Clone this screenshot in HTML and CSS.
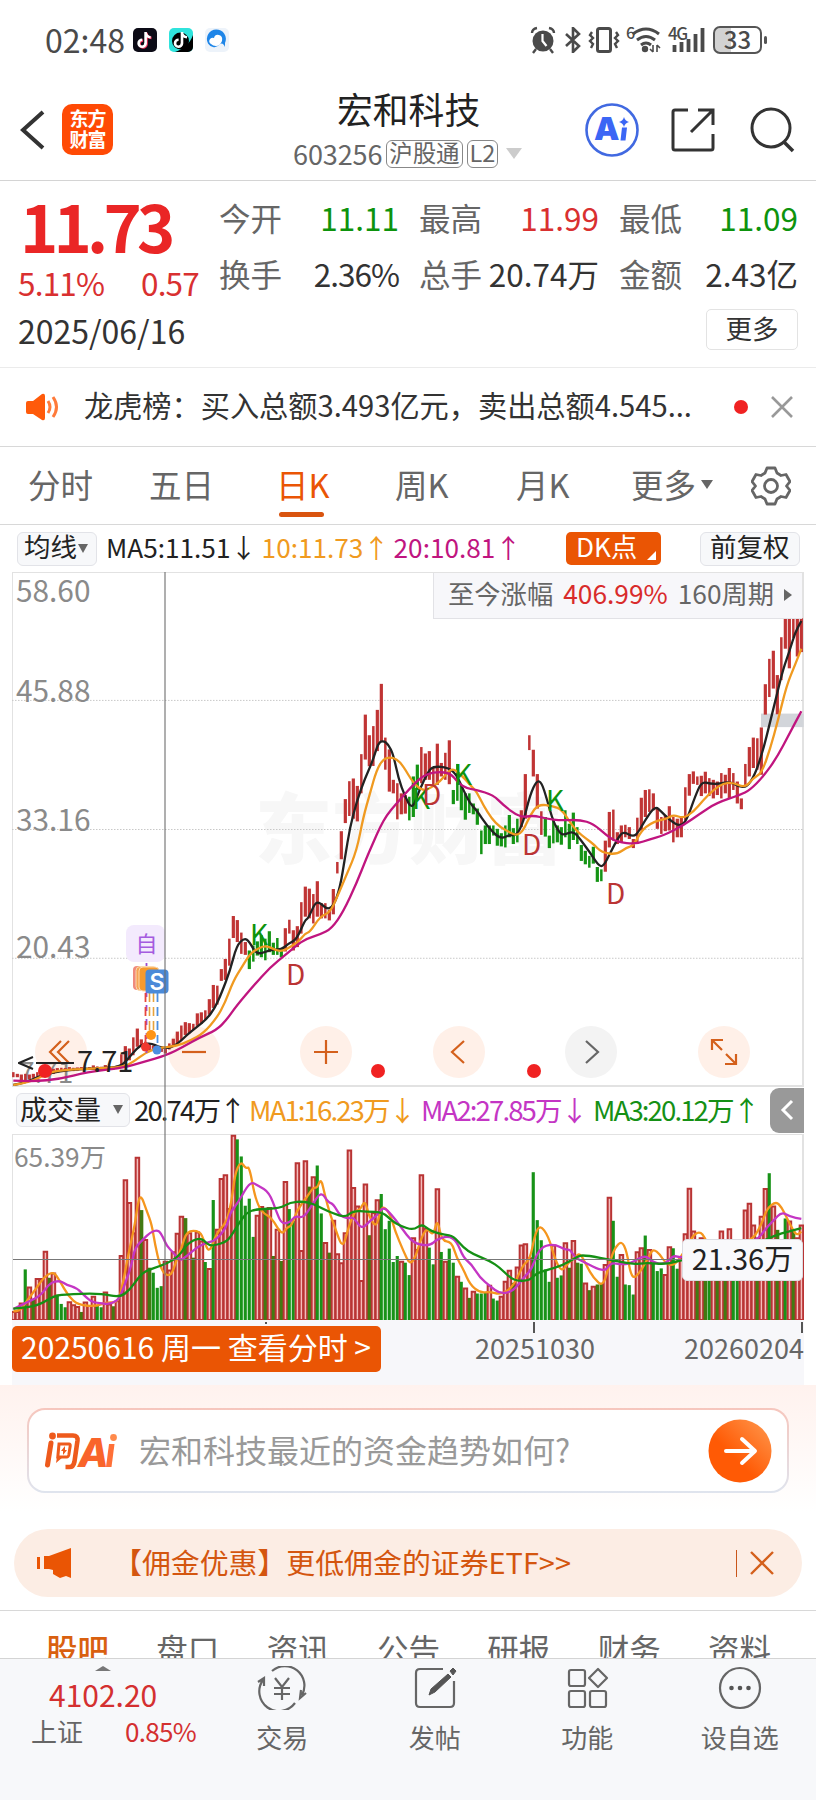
FILE: index.html
```html
<!DOCTYPE html>
<html lang="zh-CN">
<head>
  <meta charset="UTF-8" />
  <meta name="viewport" content="width=device-width, initial-scale=1.0" />
  <title>宏和科技 603256</title>
  <link rel="stylesheet" href="styles.css">
</head>
<body>
  <div class="status-bar">
    <span class="clock">02:48</span>
    <svg class="app-icon" viewBox="0 0 24 24">
      <rect width="24" height="24" rx="5" fill="#0c0b16"/>
      <g fill="none" stroke-width="2.6"><path d="M12.6 4v11.4a3.5 3.5 0 1 1-3.4-3.6M12.6 5c.6 2.600 2.400 4 5 4.200" stroke="#f2345c" transform="translate(.9 .7)"/><path d="M12.600 4v11.400a3.500 3.500 0 1 1-3.400-3.600M12.600 5c.6 2.600 2.400 4 5 4.200" stroke="#fff"/></g>
    </svg>
    <svg class="app-icon" viewBox="0 0 24 24">
      <rect width="24" height="24" rx="5" fill="#2fe3dc"/>
      <path d="M24 7v12a5 5 0 0 1-5 5H6C13 22 21 16 24 7z" fill="#000"/>
      <circle cx="11.500" cy="13" r="8.500" fill="#000"/>
      <path d="M13 4v11.400a3.500 3.500 0 1 1-3.400-3.600M13 5c.6 2.600 2.400 4 5 4.200" fill="none" stroke="#fff" stroke-width="2.600"/>
    </svg>
    <svg class="app-icon" viewBox="0 0 24 24">
      <rect width="24" height="24" rx="5" fill="#edf3fa"/>
      <path d="M3 15.500A9.500 9.500 0 1 1 20 15v4q-2-5-5-3-3 4-7 3-3-.5-5-3.500z" fill="#1f86e8"/>
      <path d="M6 16q-3-2-1-5 2-2 4-1 1-4 5-3 4 1 3 6-2 5-6 5-3 0-5-2z" fill="#fff"/>
    </svg>
    <div class="status-right">
      <svg width="26" height="28" viewBox="0 0 26 28"><circle cx="13" cy="15" r="10.500" fill="#4a4a4a"/><path d="M2 7q0-4 5-5M24 7q0-4-5-5M6 23l-3 4M20 23l3 4" fill="none" stroke="#4a4a4a" stroke-width="2.400"/><path d="M12.500 8v7l4 5" fill="none" stroke="#fff" stroke-width="2.200"/></svg>
      <svg class="bt" width="16" height="26" viewBox="0 0 16 26"><path d="M1 7l13 12-6 6V1l6 6L1 19" fill="none" stroke="#4a4a4a" stroke-width="2.600"/></svg>
      <svg class="vib" width="32" height="26" viewBox="0 0 32 26"><rect x="9.500" y="1.500" width="13" height="23" rx="2" fill="none" stroke="#4a4a4a" stroke-width="3"/><path d="M4 5l-2 3 3 3-3 3 3 3-2 4M28 5l2 3-3 3 3 3-3 3 2 4" fill="none" stroke="#4a4a4a" stroke-width="2.400"/></svg>
      <span class="wifi"><i>6</i>
        <svg width="30" height="26" viewBox="0 0 30 26"><path d="M2 7q13-10 26 0M6 13q9-7 18 0M10 18q5-4 10 0" fill="none" stroke="#4a4a4a" stroke-width="3"/><circle cx="14" cy="22" r="3.200" fill="#4a4a4a"/><path d="M22 18v7M19 22l3 3M26 25v-7M26 18l3 3" stroke="#4a4a4a" stroke-width="1.600"/></svg>
      </span>
      <span class="cell"><i>4G</i>
        <svg width="34" height="26" viewBox="0 0 34 26"><path d="M3.500 25v-7M10.500 25V15M17.500 25V12M24.500 25V7M31.500 25V1" stroke="#4a4a4a" stroke-width="3.800"/></svg>
      </span>
      <span class="battery">33</span>
    </div>
  </div>

  <header class="header">
    <svg class="back" width="25" height="40" viewBox="0 0 25 40"><path d="M23 2L3 20l20 18" fill="none" stroke="#333" stroke-width="4"/></svg>
    <div class="brand">东方<br>财富</div>
    <div class="heading">
      <h1>宏和科技</h1>
      <div class="code">603256<b>沪股通</b><b>L2</b><i class="caret"></i></div>
    </div>
    <svg class="h-ai" width="54" height="54" viewBox="0 0 54 54"><circle cx="27" cy="27" r="25.500" fill="#fff" stroke="#4169e1" stroke-width="2.600"/><text x="9" y="37" class="ai-text">A</text><path d="M35.500 37.500l1.500-13h5l-1.500 13zM39 14q1 4 5 5-4 1-5 5-1-4-5-5 4-1 5-5z" fill="#3b66f5"/></svg>
    <svg class="h-share" width="44" height="44" viewBox="0 0 44 44"><path d="M17 2H4q-2 0-2 2v36q0 2 2 2h36q2 0 2-2V26M27 2h15v15M41 3L20 24" fill="none" stroke="#333" stroke-width="3"/></svg>
    <svg class="h-search" width="46" height="46" viewBox="0 0 46 46"><circle cx="21" cy="21" r="19" fill="none" stroke="#333" stroke-width="3"/><path d="M34 35l9 9" stroke="#333" stroke-width="3.500"/></svg>
  </header>

  <section class="quote">
    <div class="price">
      <div class="last">11.73</div>
      <div class="change"><span>5.11%</span><span>0.57</span></div>
    </div>
    <div class="stats">
      <div><label>今开</label><span class="down">11.11</span></div>
      <div><label>最高</label><span class="up">11.99</span></div>
      <div><label>最低</label><span class="down">11.09</span></div>
      <div><label>换手</label><span class="rate">2.36%</span></div>
      <div><label>总手</label><span>20.74万</span></div>
      <div><label>金额</label><span>2.43亿</span></div>
    </div>
    <div class="date">2025/06/16</div>
    <div class="more">更多</div>
  </section>

  <div class="notice">
    <svg width="34" height="28" viewBox="0 0 34 28"><path d="M0 10q0-2 2-2h5l9-7q3-1 3 2v22q0 3-3 2l-9-6H2q-2 0-2-2z" fill="#ff5a0a"/><path d="M22 8q4 6 0 12M27 4q7 10 0 20" fill="none" stroke="#ff7a3a" stroke-width="3"/></svg>
    <p>龙虎榜：买入总额3.493亿元，卖出总额4.545...</p>
    <i class="dot"></i>
    <svg width="24" height="24" viewBox="0 0 24 24"><path d="M2 2l20 20M22 2L2 22" stroke="#999" stroke-width="2.600"/></svg>
  </div>

  <nav class="tabs">
    <a>分时</a>
    <a>五日</a>
    <a class="active">日K</a>
    <a>周K</a>
    <a>月K</a>
    <a class="tab-more">更多<i></i></a>
    <svg width="40" height="40" viewBox="0 0 40 40"><path d="M16 2h8l2 5 4 2.500 5-1 4 7-3.500 4.500 3.500 4.500-4 7-5-1-4 2.500-2 5h-8l-2-5-4-2.500-5 1-4-7L4.500 20 1 15.500l4-7 5 1L14 7z" fill="none" stroke="#666" stroke-width="2.800" stroke-linejoin="round"/><circle cx="20" cy="20" r="6.500" fill="none" stroke="#666" stroke-width="2.800"/></svg>
  </nav>

  <div class="ma-row">
    <span class="pill">均线<i class="tri"></i></span>
    <span class="ma5">MA5:11.51↓</span>
    <span class="ma10">10:11.73↑</span>
    <span class="ma20">20:10.81↑</span>
    <span class="dk">DK点<i></i></span>
    <span class="pill adjust">前复权</span>
  </div>

  <div class="charts">
    <div class="price-chart">
      <div class="watermark">东方财富</div>
      <div class="controls">
        <span><svg viewBox="0 0 52 52"><path d="M26 15L15 26l11 11M34 15L23 26l11 11"/></svg></span>
        <span><svg viewBox="0 0 52 52"><path d="M14 26h24"/></svg></span>
        <span><svg viewBox="0 0 52 52"><path d="M14 26h24M26 14v24"/></svg></span>
        <span><svg viewBox="0 0 52 52"><path d="M31 15L19 26l12 11"/></svg></span>
        <span class="off"><svg viewBox="0 0 52 52"><path d="M21 15l12 11-12 11"/></svg></span>
        <span><svg viewBox="0 0 52 52"><path d="M14 24V14h11M14 14l10 10M27 38h11V28M38 38L28 28"/></svg></span>
      </div>
      <span class="axis a5">7.71</span>
      <svg id="kline" viewBox="36 35 2376 1521" preserveAspectRatio="none"></svg>
      <span class="axis a1">58.60</span>
      <span class="axis a2">45.88</span>
      <span class="axis a3">33.16</span>
      <span class="axis a4">20.43</span>
      <span class="mark k k1">K</span>
      <span class="mark d d1">D</span>
      <span class="mark k k2">K</span>
      <span class="mark d d2">D</span>
      <span class="mark k k3">K</span>
      <span class="mark k k4">K</span>
      <span class="mark d d3">D</span>
      <span class="mark d d4">D</span>
      <div class="range">至今涨幅 <em>406.99%</em> 160周期<i></i></div>

      <svg class="signals" width="44" height="166" viewBox="0 0 44 166">
        <path d="M20.500 38v92" stroke="#9b4bd3" stroke-width="1.800" stroke-dasharray="6 8"/>
        <path d="M19.500 68v56" stroke="#e8453c" stroke-width="1.800" stroke-dasharray="9 5"/>
        <path d="M23.500 68v46M27.500 68v46" stroke="#e6a23c" stroke-width="1.600" stroke-dasharray="9 5"/>
        <path d="M31.500 68v50" stroke="#4d8fe0" stroke-width="1.800" stroke-dasharray="9 5"/>
        <rect x="0" y="0" width="39" height="37" rx="8" fill="#f3eafd"/>
        <rect x="7" y="41" width="20" height="24" rx="4" fill="#f08a7c"/>
        <rect x="10" y="41.500" width="20" height="24" rx="4" fill="#f7a254" stroke="#fbd9b0"/>
        <rect x="13" y="42" width="20" height="24" rx="4" fill="#f79a2e" stroke="#fbd9b0"/>
        <rect x="19.500" y="44.500" width="23" height="24" rx="4" fill="#4b8ad8"/>
        <circle cx="25" cy="110" r="5" fill="#ff9416"/>
        <circle cx="19.500" cy="122" r="4.500" fill="#f0392f"/>
        <circle cx="31" cy="125" r="4.500" fill="#4b8ee0"/>
        <text x="9.500" y="27" class="zi">自</text>
        <text x="23.500" y="65" class="s-mark">S</text>
      </svg>

      <i class="event e1"></i><i class="event e2"></i><i class="event e3"></i>
      <svg class="low-arrow" width="58" height="14" viewBox="0 0 58 14"><path d="M15 1L1 7l14 6M18 7h38" fill="none" stroke="#222" stroke-width="2"/></svg>
      <span class="low">7.71</span>
    </div>

    <div class="vol-row">
      <span class="pill">成交量<i class="tri"></i></span>
      <span class="v0">20.74万↑</span>
      <span class="ma10">MA1:16.23万↓</span>
      <span class="v2">MA2:27.85万↓</span>
      <span class="v3">MA3:20.12万↑</span>
      <span class="fold"><svg width="14" height="22" viewBox="0 0 14 22"><path d="M12 2L3 11l9 9" fill="none" stroke="#fff" stroke-width="3"/></svg></span>
    </div>

    <div class="vol-chart">
      <svg id="volume" viewBox="36 161 2376 558" preserveAspectRatio="none"></svg>
      <span class="axis v-max">65.39万</span>
      <i class="h-line"></i>
      <span class="v-label">21.36万</span>
    </div>
    <i class="v-line"></i>

    <div class="dates">
      <span class="picked">20250616 周一 查看分时 &gt;</span>
      <span class="mid">20251030</span>
      <span>20260204</span>
      <i class="tick t1"></i><i class="tick t2"></i><i class="tick t3"></i>
    </div>
  </div>

  <section class="ask">
    <div class="ask-box">
      <svg width="74" height="38" viewBox="0 0 74 38">
        <path d="M7 11L3.500 33" fill="none" stroke="#ee5a1c" stroke-width="5" stroke-linecap="round"/>
        <path d="M13 3.500h16q5 0 4.500 5l-3 21q-1 5.500-5 5.500h-4" fill="none" stroke="#ee5a1c" stroke-width="4.600"/>
        <circle cx="8.500" cy="4" r="3.400" fill="#ee5a1c"/>
        <path d="M15 12h10q1.500 0 1.200 2l-1.400 9q-.5 2-2 2h-9z" fill="none" stroke="#ee5a1c" stroke-width="3"/>
        <path d="M13 25l-1 6 7-6zM17 19l4-5v4h2l-4 5v-4z" fill="#ee5a1c"/>
        <text x="34" y="35" class="ask-ai">A</text>
        <path d="M62 35l3-23h5.500l-3 23z" fill="#ff7038"/><circle cx="69.500" cy="5.500" r="3.400" fill="#ff8a4c"/>
      </svg>
      <span>宏和科技最近的资金趋势如何?</span>
      <svg class="go" width="64" height="64" viewBox="0 0 64 64">
        <defs><linearGradient id="gg" x1="0" y1="1" x2="1" y2="0"><stop offset=".4" stop-color="#ff5a05"/><stop offset="1" stop-color="#ff9a50"/></linearGradient></defs>
        <circle cx="32" cy="32" r="31.500" fill="url(#gg)"/><path d="M18 32h28M34 20l13 12-13 12" fill="none" stroke="#fff" stroke-width="4" stroke-linecap="round" stroke-linejoin="round"/>
      </svg>
    </div>
  </section>

  <div class="promo">
    <svg width="36" height="30" viewBox="0 0 36 30"><path d="M0 9h3v12H0zM7 8h5L34 0v30l-5-2-6 2-7-4v-4l-4-1H7z" fill="#ea5504"/></svg>
    <span>【佣金优惠】更低佣金的证券ETF&gt;&gt;</span>
    <i></i>
    <svg width="24" height="24" viewBox="0 0 24 24"><path d="M1 1l22 22M23 1L1 23" stroke="#d4601c" stroke-width="2.400"/></svg>
  </div>

  <nav class="sub-tabs">
    <a class="active">股吧</a><a>盘口</a><a>资讯</a><a>公告</a><a>研报</a><a>财务</a><a>资料</a>
  </nav>

  <footer class="bottom-bar">
    <div class="index">
      <i></i>
      <strong>4102.20</strong>
      <div><span>上证</span><em>0.85%</em></div>
    </div>
    <div class="item">
      <svg width="50" height="44" viewBox="0 0 50 44"><path d="M15 5a19.500 19.500 0 0 1 30 24M38 37A19.500 19.500 0 0 1 6 14M1 16l6-4v8M49 27l-6 5 1-8M18 12l7 9 7-9M17 22h16M17 28h16M25 21v13" fill="none" stroke="#666" stroke-width="2.200"/></svg>
      交易
    </div>
    <div class="item">
      <svg width="44" height="44" viewBox="0 0 44 44"><path d="M30 3H7Q3 3 3 7v30q0 4 4 4h30q4 0 4-4V15" fill="none" stroke="#666" stroke-width="2.200"/><path d="M16 29l2-6L35 8l3 3-16 15zM37 5l3-3 3 3-3 4z" fill="#555" stroke="#555"/></svg>
      发帖
    </div>
    <div class="item">
      <svg width="44" height="44" viewBox="0 0 44 44"><g fill="none" stroke="#666" stroke-width="2.200"><rect x="4" y="4" width="16" height="16" rx="2"/><rect x="4" y="25" width="16" height="16" rx="2"/><rect x="25" y="25" width="16" height="16" rx="2"/><path d="M33 3l9 9-9 9-9-9z" stroke-linejoin="round"/></g></svg>
      功能
    </div>
    <div class="item">
      <svg width="44" height="44" viewBox="0 0 44 44"><circle cx="22" cy="22" r="20" fill="none" stroke="#666" stroke-width="2.200"/><g fill="#555"><circle cx="13.500" cy="22" r="2.300"/><circle cx="22" cy="22" r="2.300"/><circle cx="30.500" cy="22" r="2.300"/></g></svg>
      设自选
    </div>
  </footer>

  <script src="chart.js"></script>
</body>
</html>
```

FILE: styles.css
```css
* {
  box-sizing: border-box;
}

body {
  margin: 0;
  width: 816px;
  height: 1800px;
  overflow: hidden;
  background: #fff;
  color: #333;
  font-family: "Noto Sans CJK SC", "Noto Sans", sans-serif;
  line-height: 1;
}

i, em {
  font-style: normal;
}

svg {
  display: block;
  flex: none;
}

/* status bar */
.status-bar {
  display: flex;
  align-items: center;
  height: 79px;
  padding: 0 54px 0 45px;
  color: #4a4a4a;
}

.clock {
  width: 88px;
  padding-bottom: 2px;
  font-size: 32px;
}

.app-icon {
  width: 24px;
  height: 24px;
  margin-right: 12px;
}

.status-right {
  display: flex;
  align-items: center;
  margin-left: auto;
}

.bt {
  margin-left: 9px;
}

.vib {
  margin-left: 7px;
}

.wifi, .cell {
  display: flex;
  margin-left: 6px;
}

.wifi i, .cell i {
  width: 5px;
  margin-top: -3px;
  font-size: 16px;
  font-weight: 500;
}

.cell {
  margin-left: 7px;
  letter-spacing: -1.5px;
}

.cell i {
  width: 3px;
  font-size: 17px;
}

.battery {
  position: relative;
  width: 49px;
  height: 28px;
  margin-left: 8px;
  border: 2px solid #555;
  border-radius: 7px;
  background: linear-gradient(90deg, #d2d2d2 36%, #fff 36%);
  font-size: 24px;
  font-weight: 500;
  line-height: 22px;
  text-align: center;
}

.battery::after {
  content: "";
  position: absolute;
  top: 8px;
  right: -7px;
  width: 3px;
  height: 8px;
  border-radius: 2px;
  background: #555;
}

/* header */
.header {
  display: flex;
  align-items: center;
  height: 102px;
  padding: 0 20px 0 20px;
  border-bottom: 1px solid #d4d4d4;
}

.brand {
  width: 51px;
  height: 51px;
  margin-left: 17px;
  padding-top: 3px;
  border-radius: 10px;
  background: #ff4a05;
  color: #fff;
  font-size: 19px;
  font-weight: 700;
  line-height: 21px;
  text-align: center;
  letter-spacing: -1px;
}

.heading {
  width: 230px;
  margin-left: 180px;
}

h1 {
  margin: 0;
  padding-left: 44px;
  font-size: 35.800px;
  font-weight: 400;
  color: #222;
}

.code {
  display: flex;
  align-items: center;
  margin-top: 13px;
  color: #666;
  font-size: 27px;
  letter-spacing: -0.1px;
}

.code b {
  height: 28px;
  margin-left: 4px;
  padding: 0 2px;
  border: 1.500px solid #888;
  border-radius: 6px;
  font-size: 23.500px;
  font-weight: 400;
  line-height: 23px;
}

.caret {
  margin-left: 8px;
  border: 8px solid transparent;
  border-top: 11px solid #ccc;
  border-bottom: 0;
}

.h-ai {
  margin-left: 62px;
}

.ai-text {
  font-family: Inter, sans-serif;
  font-size: 32px;
  font-weight: 900;
  fill: #3b66f5;
}

.h-share {
  margin-left: 32px;
}

.h-search {
  margin-left: auto;
}

/* quote */
.quote {
  display: grid;
  grid-template-columns: 200px 1fr;
  grid-template-rows: 111px 1fr;
  height: 187px;
  padding: 14px 18px 0 18px;
  border-bottom: 1px solid #ebebeb;
}

.last {
  margin-top: -4px;
  padding: 2px 0 0 2px;
  color: #ea2626;
  font-size: 65px;
  font-weight: 700;
  letter-spacing: -4.8px;
}

.change {
  display: flex;
  justify-content: space-between;
  width: 181px;
  margin-top: 9px;
  color: #d93030;
  font-size: 31.5px;
  letter-spacing: -0.8px;
}

.stats {
  display: grid;
  grid-template-columns: 180px 180px 179px;
  grid-template-rows: 56px 56px;
  column-gap: 20px;
  margin: -5px 0 0 1px;
}

.stats div {
  display: flex;
  align-items: center;
  justify-content: space-between;
  font-size: 31.500px;
}

.stats label {
  color: #666;
  font-size: 31.500px;
}

.stats .rate {
  letter-spacing: -1px;
}

.up {
  color: #d93030;
}

.down {
  color: #0d930d;
}

.date {
  padding-top: 8px;
  font-size: 32px;
}

.more {
  justify-self: end;
  width: 92px;
  height: 41px;
  margin-top: 3px;
  border: 1.500px solid #e3e3e3;
  border-radius: 5px;
  font-size: 26.500px;
  line-height: 35px;
  text-align: center;
}

/* notice */
.notice {
  display: flex;
  align-items: center;
  height: 79px;
  padding: 0 22px 0 26px;
  border-bottom: 1px solid #d8d8d8;
}

.notice p {
  margin: 0 0 5px 24px;
  font-size: 29.200px;
  white-space: nowrap;
}

.dot {
  width: 14px;
  height: 14px;
  margin: 0 22px 0 auto;
  border-radius: 50%;
  background: #f02222;
}

/* period tabs */
.tabs {
  display: grid;
  grid-template-columns: 121px 127px 119px 121px 115px 120px 40px;
  align-items: center;
  height: 78px;
  padding-left: 28px;
  border-bottom: 1px solid #d8d8d8;
  color: #666;
  font-size: 32.500px;
}

.tabs a {
  position: relative;
  padding-bottom: 2px;
}

.tabs .active {
  color: #ea5504;
}

.tabs .active::after {
  content: "";
  position: absolute;
  left: 3px;
  bottom: -14px;
  width: 45px;
  height: 5px;
  border-radius: 3px;
  background: #d9540f;
}

.tab-more {
  display: flex;
  align-items: center;
}

.tab-more i {
  margin-left: 5px;
  border: 6px solid transparent;
  border-top: 9px solid #666;
  border-bottom: 0;
}

/* moving averages */
.ma-row {
  display: flex;
  align-items: center;
  height: 47px;
  padding: 0 16px 0 17px;
  font-size: 26.200px;
}

.ma-row .ma5, .ma-row .ma10, .ma-row .ma20 {
  padding-bottom: 3px;
}

.pill {
  display: flex;
  align-items: center;
  height: 34px;
  padding: 0 7px 4px;
  border: 1.500px solid #e2e3e8;
  border-radius: 6px;
  background: #f7f8fa;
  color: #222;
  font-size: 26.500px;
}

.tri {
  border: 5.500px solid transparent;
  border-top: 9px solid #666;
  border-bottom: 0;
}

.ma-row .pill {
  width: 80px;
  padding-left: 6px;
}

.ma-row .pill .tri {
  margin: 3px 0 0 1px;
}

.ma5 {
  margin-left: 9px;
  color: #222;
}

.ma10 {
  margin-left: 5px;
  color: #f09a20;
}

.ma20 {
  margin-left: 4px;
  color: #c0157f;
}

.dk {
  position: relative;
  width: 95px;
  height: 33px;
  margin-left: auto;
  padding-left: 10px;
  border-radius: 5px;
  background: #ea5504;
  color: #fff;
  line-height: 29px;
}

.dk i {
  position: absolute;
  right: 5px;
  bottom: 5px;
  border-left: 9px solid transparent;
  border-bottom: 9px solid #fff;
}

.ma-row .adjust {
  width: 100px;
  margin-left: 39px;
  padding-left: 9px;
}

/* charts */
.charts {
  position: relative;
  margin: 0 12px;
}

.price-chart {
  position: relative;
  height: 515px;
  border: 1.500px solid #e2e2e2;
  border-width: 1.500px 2px 2px 1px;
}

#kline, #volume {
  position: absolute;
  top: 0;
  left: 0;
  width: 792px;
  height: 514px;
  margin: -1px 0 0 -1px;
}

#volume {
  height: 187px;
}

#kline *, #volume * {
  vector-effect: non-scaling-stroke;
}

.watermark {
  position: absolute;
  top: 213px;
  left: 242px;
  color: #f7f7f7;
  font-size: 77px;
  font-weight: 900;
}

.axis {
  position: absolute;
  left: 3px;
  color: #8a8a8a;
  font-size: 29.800px;
}

.a1 { top: 2px; }
.a2 { top: 102px; }
.a3 { top: 231px; }
.a4 { top: 358px; }
.a5 { top: 484px; left: 6px; font-size: 28px; }

.mark {
  position: absolute;
  font-size: 28px;
}

.k { color: #0d930d; }
.d { color: #bb3434; }
.k1 { left: 237px; top: 346px; }
.d1 { left: 273px; top: 386px; }
.k2 { left: 399px; top: 210px; }
.d2 { left: 409px; top: 206px; }
.k3 { left: 441px; top: 186px; }
.k4 { left: 533px; top: 212px; }
.d3 { left: 509px; top: 256px; }
.d4 { left: 593px; top: 305px; }

.range {
  position: absolute;
  top: 0;
  right: 0;
  display: flex;
  align-items: center;
  width: 369px;
  height: 46px;
  padding: 0 14px 5px;
  gap: 10px;
  border: 1px solid #e2e2e6;
  border-width: 0 0 1px 1px;
  background: #f7f7fa;
  color: #666;
  font-size: 26.300px;
  white-space: nowrap;
}

.range em {
  color: #d92b2b;
}

.range i {
  margin-top: 4px;
  border: 6px solid transparent;
  border-left: 8px solid #666;
  border-right: 0;
}

.signals {
  position: absolute;
  left: 113px;
  top: 352px;
}

.zi {
  font-size: 22px;
  fill: #a55be0;
}

.s-mark {
  font-family: Inter, sans-serif;
  font-size: 23px;
  font-weight: 600;
  fill: #fff;
}

.controls {
  position: absolute;
  left: 22px;
  top: 453px;
  display: flex;
  justify-content: space-between;
  width: 715px;
}

.controls span {
  width: 52px;
  height: 52px;
  border-radius: 50%;
  background: #fff0e8;
}

.controls path {
  fill: none;
  stroke: #d4601c;
  stroke-width: 2.2;
}

.controls .off {
  background: #f3f3f3;
}

.controls .off path {
  stroke: #666;
}

.event {
  position: absolute;
  top: 491px;
  width: 14px;
  height: 14px;
  border-radius: 50%;
  background: #f02222;
}

.e1 { left: 25px; }
.e2 { left: 358px; }
.e3 { left: 514px; }

.low-arrow {
  position: absolute;
  left: 5px;
  top: 483px;
}

.low {
  position: absolute;
  left: 64px;
  top: 472px;
  color: #222;
  font-size: 29px;
}

.vol-row {
  display: flex;
  align-items: center;
  height: 47px;
  padding: 0 0 1px 4px;
  font-size: 27.600px;
  letter-spacing: -1.900px;
  white-space: nowrap;
}

.vol-row .pill {
  width: 114px;
  padding: 0 6px 4px 3px;
  font-size: 27px;
  letter-spacing: 0;
}

.vol-row .tri {
  margin: 3px 0 0 auto;
}

.v0 {
  width: 109px;
  margin-left: 4px;
  color: #222;
}

.v0, .vol-row .ma10, .v2, .v3 {
  padding-bottom: 1px;
}

.vol-row .ma10, .v2, .v3 {
  width: 166px;
  margin-left: 6px;
}

.v2 {
  color: #c436c4;
}

.v3 {
  color: #159015;
}

.fold {
  display: flex;
  align-items: center;
  justify-content: center;
  width: 34px;
  height: 45px;
  margin-left: auto;
  border-radius: 9px 0 0 9px;
  background: #999;
}

.vol-chart {
  position: relative;
  height: 186px;
  border: 1px solid #e2e2e2;
  border-right-width: 2px;
  border-bottom: 0;
}

.v-max {
  top: 8px;
  left: 1px;
  font-size: 26.300px;
}

.h-line {
  position: absolute;
  left: 0;
  top: 124px;
  width: 670px;
  height: 1px;
  background: #777;
}

.v-line {
  position: absolute;
  left: 152px;
  top: 0;
  width: 2px;
  height: 752px;
  background: rgba(110, 110, 110, 0.55);
}

.v-label {
  position: absolute;
  right: -1px;
  top: 104px;
  width: 121px;
  height: 42px;
  border: 1px solid #dcdce2;
  border-radius: 5px;
  background: #f9f9fb;
  color: #222;
  font-size: 29px;
  line-height: 35px;
  text-align: center;
}

.dates {
  position: relative;
  display: flex;
  align-items: center;
  height: 65px;
  padding-bottom: 7px;
  background: #f7f7fa;
  color: #666;
  font-size: 27px;
}

.dates span {
  padding-bottom: 4px;
}

.dates .picked {
  width: 369px;
  height: 46px;
  padding: 0 0 0 9px;
  border-radius: 5px;
  background: #ea5504;
  color: #fff;
  font-size: 30px;
  line-height: 41px;
  white-space: nowrap;
}

.mid {
  margin: 0 auto 0 94px;
}

.tick {
  position: absolute;
  top: 2px;
  width: 2px;
  height: 11px;
  background: #555;
}

.t1 { left: 253px; height: 2px; }
.t2 { left: 521px; }
.t3 { left: 789px; }

/* ask ai */
.ask {
  height: 144px;
  padding: 23px 27px 0;
  background: linear-gradient(#fff2ee, #fff 88%);
}

.ask-box {
  display: flex;
  align-items: center;
  height: 85px;
  padding: 0 15px 0 15px;
  border: 2px solid transparent;
  border-radius: 18px;
  background: linear-gradient(#fff, #fff) padding-box, linear-gradient(#f6c6bd, #dfe4ee) border-box;
  color: #999;
  font-size: 32px;
}

.ask-box span {
  margin-left: 21px;
  padding-bottom: 3px;
}

.ask-ai {
  font-family: Inter, sans-serif;
  font-size: 40px;
  font-weight: 800;
  font-style: italic;
  fill: #f9642a;
}

.go {
  margin-left: auto;
}

/* promo */
.promo {
  display: flex;
  align-items: center;
  width: 788px;
  height: 68px;
  margin: 0 14px 13px;
  padding: 0 28px 0 23px;
  border-radius: 34px;
  background: #fcede4;
  color: #d4560f;
  font-size: 28.900px;
}

.promo span {
  margin-left: 40px;
  padding-bottom: 3px;
}

.promo i {
  width: 1px;
  height: 27px;
  margin: 0 13px 0 auto;
  background: #c9561a;
}

/* content tabs */
.sub-tabs {
  display: flex;
  justify-content: space-between;
  height: 48px;
  padding: 22px 45px 0 46px;
  overflow: hidden;
  border-top: 1px solid #d8d8d8;
  color: #666;
  font-size: 31.500px;
}

.sub-tabs .active {
  color: #d9600f;
  font-weight: 500;
}

/* bottom bar */
.bottom-bar {
  display: flex;
  height: 142px;
  border-top: 1px solid #d4d4d4;
  background: #f7f8fa;
  color: #666;
  font-size: 26px;
}

.index {
  width: 206px;
  padding-top: 7px;
}

.index i {
  display: block;
  width: 16px;
  margin-left: 95px;
  border: 8px solid transparent;
  border-top: 0;
  border-bottom: 5px solid #777;
}

.index strong {
  display: block;
  margin: 8px 0 0 49px;
  color: #d43030;
  font-size: 30px;
  font-weight: 400;
}

.index div {
  display: flex;
  justify-content: space-between;
  margin-top: 9px;
  padding: 0 10px 0 31px;
}

.index em {
  color: #d43030;
  letter-spacing: -0.7px;
}

.item {
  display: flex;
  flex-direction: column;
  align-items: center;
  width: 152.500px;
  padding-top: 7px;
}

.item svg {
  margin-bottom: 14px;
}
```

FILE: chart.js
```js
// 12 units per bar, first bar centred on x = 40
const STEP = 12;
const X0 = 40;

// high / low of each bar
const bars = [
  1515,1530, 1520,1530, 1522,1545, 1520,1540, 1522,1537, 1520,1532, 1515,1528, 1512,1525, 1505,1525, 1508,1522,
  1505,1520, 1503,1515, 1502,1512, 1503,1512, 1500,1510, 1502,1512, 1501,1510, 1500,1508, 1501,1509, 1500,1508,
  1495,1508, 1498,1506, 1499,1508, 1494,1506, 1498,1506, 1499,1507, 1496,1506, 1462,1500, 1438,1490, 1445,1480,
  1412,1465, 1386,1440, 1418,1440, 1425,1450, 1430,1450, 1436,1450, 1438,1450, 1440,1455, 1440,1460, 1430,1448,
  1416,1440, 1395,1432, 1377,1420, 1367,1405, 1370,1400, 1372,1390, 1341,1378, 1338,1372, 1332,1360, 1299,1345,
  1257,1325, 1259,1315, 1210,1245, 1180,1242, 1120,1200, 1053,1118, 1065,1130, 1102,1165, 1130,1168, 1155,1210,
  1140,1188, 1128,1170, 1110,1175, 1120,1184, 1098,1160, 1132,1168, 1118,1168, 1150,1175, 1089,1158, 1064,1105,
  1095,1155, 1083,1145, 1012,1105, 966,1055, 972,1060, 988,1075, 950,1055, 1015,1060, 1015,1060, 1035,1066,
  973,1048, 893,927, 802,885, 707,778, 654,757, 646,765, 668,773, 574,690, 457,590, 518,610,
  491,609, 443,565, 366,535, 525,620, 560,685, 650,690, 660,767, 690,752, 695,750, 700,770,
  640,760, 605,680, 553,660, 572,650, 565,650, 615,670, 543,665, 600,640, 570,650, 533,663,
  680,722, 603,712, 665,740, 690,768, 690,748, 720,752, 735,783, 800,870, 785,840, 785,840,
  785,815, 795,845, 808,847, 785,850, 754,820, 793,840, 765,835, 740,790, 633,765, 518,562,
  561,640, 633,735, 743,813, 760,818, 815,852, 770,838, 785,835, 790,842, 740,820, 780,855,
  747,828, 790,840, 843,890, 860,900, 875,910, 848,898, 908,952, 915,950, 830,922, 745,850,
  738,830, 805,840, 785,835, 783,820, 790,825, 825,852, 762,840, 703,800, 680,760, 678,745,
  690,740, 735,795, 760,810, 755,802, 728,800, 760,835, 765,820, 760,820, 672,770, 633,697,
  625,662, 640,665, 638,698, 626,690, 645,698, 650,705, 655,695, 630,705, 635,690, 615,705,
  630,680, 655,720, 705,737, 603,670, 553,640, 525,615, 527,620, 495,635, 367,457, 292,405,
  268,380, 340,456, 228,355, 172,262, 172,320, 172,230, 172,285, 172,272
];

// index ranges drawn green
const greenRanges = [[59, 67], [99, 101], [110, 126], [133, 147]];

const ma5 = "40,1553 80,1545 120,1525 200,1508 300,1504 360,1500 385,1475 410,1445 430,1432 455,1430 475,1440 500,1445 530,1435 560,1405 590,1382 620,1358 645,1325 665,1280 690,1215 710,1140 733,1118 748,1128 770,1169 810,1153 845,1152 865,1135 890,1122 915,1065 925,1060 945,1014 960,1013 980,1033 1000,1025 1020,970 1035,880 1050,790 1070,715 1095,645 1118,595 1135,540 1150,534 1165,545 1180,575 1195,645 1215,700 1237,739 1258,680 1285,625 1300,610 1345,613 1370,635 1390,680 1410,720 1430,740 1460,785 1500,826 1530,812 1550,815 1570,775 1590,695 1610,652 1625,658 1640,705 1660,775 1680,808 1690,813 1720,802 1740,825 1770,865 1795,903 1810,907 1830,868 1855,820 1870,803 1900,819 1915,805 1935,770 1965,727 1985,745 2010,770 2040,788 2060,770 2085,700 2105,655 2130,662 2160,662 2190,655 2215,670 2240,672 2265,635 2290,560 2310,480 2330,400 2350,320 2370,265 2385,215 2404,180";
const ma10 = "40,1553 90,1545 150,1515 200,1508 290,1504 370,1500 400,1485 440,1455 480,1442 530,1438 570,1422 610,1400 650,1355 675,1310 700,1245 725,1205 750,1165 775,1148 800,1140 830,1156 850,1156 870,1145 895,1130 915,1105 930,1100 960,1055 990,1042 1010,1000 1040,930 1070,860 1090,760 1110,690 1130,620 1150,588 1170,583 1190,588 1210,610 1240,660 1270,684 1295,672 1320,655 1345,625 1360,617 1380,632 1410,665 1430,685 1450,725 1475,765 1500,790 1530,806 1550,815 1570,800 1590,755 1615,722 1660,728 1685,738 1710,775 1730,802 1760,825 1780,840 1805,865 1850,871 1880,850 1900,845 1925,800 1950,780 1975,770 2000,765 2020,753 2050,764 2080,745 2110,710 2140,680 2170,660 2200,658 2235,674 2260,645 2285,630 2310,560 2335,470 2360,370 2385,310 2404,262";
const ma20 = "40,1540 100,1543 180,1535 260,1515 370,1502 430,1485 500,1465 550,1440 600,1412 650,1390 680,1360 710,1318 760,1260 810,1205 860,1165 890,1140 915,1122 960,1108 995,1090 1030,1040 1070,955 1100,880 1120,835 1140,790 1160,755 1185,725 1230,675 1265,640 1300,627 1350,628 1375,660 1400,675 1430,680 1480,695 1510,725 1560,762 1600,755 1640,765 1680,770 1740,768 1780,780 1820,815 1850,834 1910,840 1950,825 1990,815 2050,785 2100,750 2150,718 2220,695 2250,680 2290,640 2330,585 2370,510 2404,447";

const volumes = "690r 690r 665r 565g 617r 655o 592r 592r 510r 590o 575r 640g 668g 678g 661r 670r 675r 692o 662r 672r 645r 672g 678g 632r 668r 675o 658r 523r 297r 365r 455r 230r 388o 475r 560o 575g 620g 615g 540r 566r 512r 457r 406r 412o 455r 530o 453r 480r 543g 562r 358g 445r 293r 282r 383r 164r 177g 228g 375g 354g 468g 403r 377r 388o 380r 525o 445r 540o 302r 385g 420g 246r 508r 240r 318o 288r 255g 398g 484r 515o 418r 518r 545r 455r 208r 320r 375r 598r 310r 463o 395r 357r 340g 445g 420g 543g 525g 540r 545g 582g 470r 505r 282r 442r 500g 550g 324r 513g 540r 503g 545g 585r 602g 620r 650o 630r 637g 637g 635g 612r 652g 658g 645r 600r 567r 605o 557r 492r 488r 530r 275g 418g 478g 565g 602g 492r 590g 583g 485r 560o 478r 545o 548g 605r 627o 615r 610o 608o 550r 349r 420g 587g 520r 610g 612g 640g 512r 500r 464g 505r 545g 570g 562g 580r 497r 502g 563g 530r 458r 322r 450r 475o 470r 500o 520g 520r 520o 450r 520o 443r 500g 510g 500r 387r 367r 432r 470o 406r 323r 278g 375r 447o 480r 413g 420r 450o 470r 432r";

const volMa1 = "40,690 60,690 80,660 110,620 130,590 160,570 180,600 205,645 235,672 290,675 320,662 355,665 370,600 385,520 405,430 412,375 422,340 440,390 455,430 465,490 480,555 495,582 515,582 530,535 545,500 560,450 600,450 612,480 628,518 650,455 680,425 695,360 705,280 722,242 738,265 748,258 765,350 785,395 815,410 845,463 860,440 875,435 890,390 920,350 940,320 952,322 963,292 975,345 990,400 1005,440 1028,505 1045,440 1065,390 1080,388 1095,358 1105,400 1120,430 1132,432 1145,372 1170,398 1185,450 1210,510 1230,552 1248,525 1260,480 1280,440 1300,466 1312,412 1325,480 1355,483 1370,530 1390,565 1410,610 1440,635 1470,632 1500,640 1530,625 1550,595 1570,550 1590,535 1605,460 1620,432 1645,465 1665,535 1685,573 1705,545 1725,530 1740,515 1760,555 1780,590 1810,618 1830,540 1845,500 1865,480 1880,510 1895,596 1920,575 1950,520 1960,504 1980,520 1995,545 2020,555 2045,525 2065,490 2080,462 2100,452 2115,470 2130,510 2200,520 2240,480 2262,470 2285,430 2300,385 2328,362 2345,380 2360,410 2375,440 2390,464 2404,452";
const volMa2 = "40,683 100,655 125,640 150,605 180,598 200,612 230,620 260,650 280,665 350,670 375,610 395,550 405,500 430,475 450,455 475,446 490,470 500,495 520,515 540,540 560,525 590,500 620,485 645,480 680,440 690,395 715,365 750,302 775,315 808,335 830,395 845,429 870,425 885,405 910,412 935,375 963,332 985,365 1000,370 1020,405 1045,414 1060,408 1085,446 1110,420 1130,405 1150,377 1175,402 1200,435 1240,488 1290,495 1310,475 1345,465 1370,480 1390,530 1415,550 1440,590 1470,615 1500,638 1540,630 1570,590 1595,565 1610,520 1630,495 1665,490 1695,507 1710,505 1725,530 1745,540 1815,574 1830,545 1865,550 1890,548 1935,521 1960,545 1995,550 2020,522 2045,532 2100,510 2200,500 2270,480 2300,440 2320,420 2345,393 2370,408 2404,414";
const volMa3 = "40,682 90,678 130,665 160,645 190,640 300,636 360,649 390,625 415,590 435,570 480,555 520,538 545,515 560,490 600,468 625,492 640,494 680,483 700,455 715,430 740,395 770,385 840,383 870,365 910,362 940,370 970,385 1000,398 1035,410 1060,390 1100,392 1150,395 1175,420 1200,435 1240,448 1265,430 1285,445 1305,455 1335,462 1360,465 1390,500 1420,520 1470,540 1500,560 1530,590 1555,600 1590,597 1610,575 1640,568 1690,552 1730,528 1750,521 1850,540 1900,550 1940,545 2000,550 2050,535 2100,530 2200,520 2270,490 2320,465 2370,450 2404,442";

// quadratic curve through the midpoints
function curve(text, color) {
  const p = text.split(' ').map(s => s.split(',').map(Number));
  let d = `M${p[0]}`;
  for (let i = 1; i < p.length - 1; i++) {
    const mx = (p[i][0] + p[i + 1][0]) / 2;
    const my = (p[i][1] + p[i + 1][1]) / 2;
    d += `Q${p[i]} ${mx},${my}`;
  }
  d += `L${p[p.length - 1]}`;
  return `<path d="${d}" fill="none" stroke="${color}" stroke-width="2.3"/>`;
}

function drawKline() {
  let html = '';
  [415, 797, 1178].forEach(y => {
    html += `<path d="M36 ${y}H2412" stroke="#c8c8c8" stroke-width="1" stroke-dasharray="1.5 1.5"/>`;
  });
  html += '<rect x="2283" y="454" width="128" height="40" fill="#d2d5da"/>';
  for (let i = 0; i < bars.length / 2; i++) {
    const green = greenRanges.some(r => i >= r[0] && i <= r[1]);
    const x = X0 + i * STEP;
    html += `<path d="M${x} ${bars[i * 2]}V${bars[i * 2 + 1]}" stroke="${green ? '#149414' : '#c03434'}" stroke-width="${i % 3 ? 3.2 : 2.5}"/>`;
  }
  html += curve(ma5, '#222') + curve(ma10, '#f09a20') + curve(ma20, '#c0157f');
  document.getElementById('kline').innerHTML = html;
}

function drawVolume() {
  let html = '';
  volumes.split(' ').forEach((v, i) => {
    const top = parseInt(v);
    const kind = v.slice(-1);
    const x = X0 + i * STEP;
    if (kind === 'r') {
      html += `<rect x="${x - 5}" y="${top + 2}" width="10.5" height="${716 - top - 2}" fill="#f3bcbc" stroke="#b93434" stroke-width="2"/>`;
    } else {
      html += `<rect x="${x - 5}" y="${top}" width="${kind === 'o' ? 11 : 9.5}" height="${718 - top}" fill="${kind === 'o' ? '#427a12' : '#189218'}"/>`;
    }
  });
  html += curve(volMa1, '#f5961e') + curve(volMa2, '#c436c4') + curve(volMa3, '#159015');
  document.getElementById('volume').innerHTML = html;
}

drawKline();
drawVolume();
```
